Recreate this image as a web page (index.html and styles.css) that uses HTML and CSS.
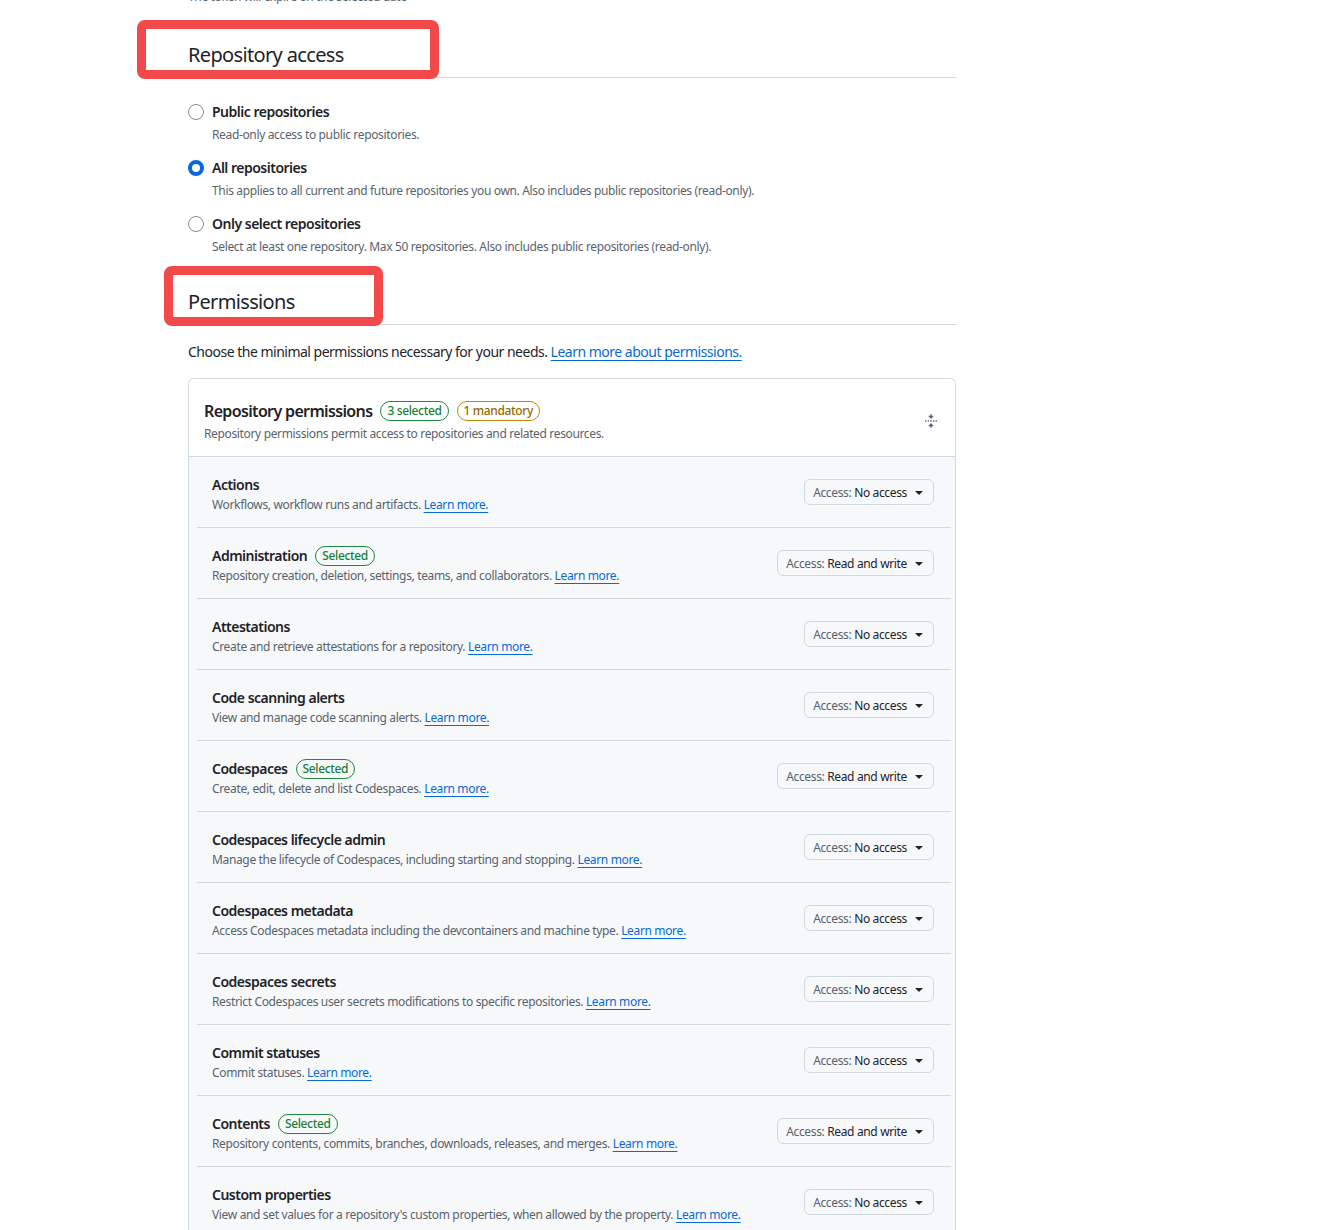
FILE: index.html
```html
<!DOCTYPE html>
<html lang="en">
<head>
<meta charset="utf-8">
<title>Fine-grained token</title>
<link rel="stylesheet" href="styles.css">
</head>
<body>
<div class="page">
  <p class="expire-note">The token will expire on the selected date</p>

  <div class="section-head">
    <h2 class="section-title">Repository access</h2>
    <span class="annot annot-access"></span>
  </div>

  <div class="radio-list">
    <div class="option">
      <div class="option-row"><span class="radio"></span><span class="option-label">Public repositories</span></div>
      <p class="option-desc">Read-only access to public repositories.</p>
    </div>
    <div class="option">
      <div class="option-row"><span class="radio checked"></span><span class="option-label">All repositories</span></div>
      <p class="option-desc">This applies to all current and future repositories you own. Also includes public repositories (read-only).</p>
    </div>
    <div class="option">
      <div class="option-row"><span class="radio"></span><span class="option-label">Only select repositories</span></div>
      <p class="option-desc">Select at least one repository. Max 50 repositories. Also includes public repositories (read-only).</p>
    </div>
  </div>

  <div class="section-head perm-head">
    <h2 class="section-title">Permissions</h2>
    <span class="annot annot-perm"></span>
  </div>

  <p class="intro">Choose the minimal permissions necessary for your needs. <a href="#" class="link">Learn more about permissions.</a></p>

  <div class="card">
    <div class="card-head">
      <div class="card-head-text">
        <div class="card-title-row">
          <h3 class="card-title">Repository permissions</h3>
          <span class="badge badge-green">3 selected</span>
          <span class="badge badge-gold">1 mandatory</span>
        </div>
        <p class="card-desc">Repository permissions permit access to repositories and related resources.</p>
      </div>
      <svg class="fold-icon" viewBox="0 0 16 16" width="16" height="16" aria-hidden="true"><path d="M10.896 2H8.75V.75a.75.75 0 0 0-1.5 0V2H5.104a.25.25 0 0 0-.177.427l2.896 2.896a.25.25 0 0 0 .354 0l2.896-2.896A.25.25 0 0 0 10.896 2ZM8.75 15.250a.75.75 0 0 1-1.5 0V14H5.104a.25.25 0 0 1-.177-.427l2.896-2.896a.25.25 0 0 1 .354 0l2.896 2.896a.25.25 0 0 1-.177.427H8.75v1.25Zm-6.5-6.5a.75.75 0 0 0 0-1.5h-.5a.75.75 0 0 0 0 1.5h.5ZM6 8a.75.75 0 0 1-.75.75h-.5a.75.75 0 0 1 0-1.5h.5A.75.75 0 0 1 6 8Zm2.25.75a.75.75 0 0 0 0-1.5h-.5a.75.75 0 0 0 0 1.5h.5ZM12 8a.75.75 0 0 1-.75.75h-.5a.75.75 0 0 1 0-1.5h.5A.75.75 0 0 1 12 8Zm2.25.75a.75.75 0 0 0 0-1.5h-.5a.75.75 0 0 0 0 1.5h.5Z"/></svg>
    </div>

    <div class="card-body">
      <div class="perm-row">
        <div class="perm-text">
          <div class="perm-title-row"><span class="perm-title">Actions</span></div>
          <p class="perm-desc">Workflows, workflow runs and artifacts. <a href="#" class="link">Learn more.</a></p>
        </div>
        <button class="access-btn"><span class="access-key">Access:</span> No access<svg class="caret" viewBox="0 0 16 16" width="16" height="16"><path d="m4.427 7.427 3.396 3.396a.25.25 0 0 0 .354 0l3.396-3.396A.25.25 0 0 0 11.396 7H4.604a.25.25 0 0 0-.177.427Z"/></svg></button>
      </div>
      <div class="perm-row">
        <div class="perm-text">
          <div class="perm-title-row"><span class="perm-title">Administration</span><span class="badge badge-green">Selected</span></div>
          <p class="perm-desc">Repository creation, deletion, settings, teams, and collaborators. <a href="#" class="link">Learn more.</a></p>
        </div>
        <button class="access-btn"><span class="access-key">Access:</span> Read and write<svg class="caret" viewBox="0 0 16 16" width="16" height="16"><path d="m4.427 7.427 3.396 3.396a.25.25 0 0 0 .354 0l3.396-3.396A.25.25 0 0 0 11.396 7H4.604a.25.25 0 0 0-.177.427Z"/></svg></button>
      </div>
      <div class="perm-row">
        <div class="perm-text">
          <div class="perm-title-row"><span class="perm-title">Attestations</span></div>
          <p class="perm-desc">Create and retrieve attestations for a repository. <a href="#" class="link">Learn more.</a></p>
        </div>
        <button class="access-btn"><span class="access-key">Access:</span> No access<svg class="caret" viewBox="0 0 16 16" width="16" height="16"><path d="m4.427 7.427 3.396 3.396a.25.25 0 0 0 .354 0l3.396-3.396A.25.25 0 0 0 11.396 7H4.604a.25.25 0 0 0-.177.427Z"/></svg></button>
      </div>
      <div class="perm-row">
        <div class="perm-text">
          <div class="perm-title-row"><span class="perm-title">Code scanning alerts</span></div>
          <p class="perm-desc">View and manage code scanning alerts. <a href="#" class="link">Learn more.</a></p>
        </div>
        <button class="access-btn"><span class="access-key">Access:</span> No access<svg class="caret" viewBox="0 0 16 16" width="16" height="16"><path d="m4.427 7.427 3.396 3.396a.25.25 0 0 0 .354 0l3.396-3.396A.25.25 0 0 0 11.396 7H4.604a.25.25 0 0 0-.177.427Z"/></svg></button>
      </div>
      <div class="perm-row">
        <div class="perm-text">
          <div class="perm-title-row"><span class="perm-title">Codespaces</span><span class="badge badge-green">Selected</span></div>
          <p class="perm-desc">Create, edit, delete and list Codespaces. <a href="#" class="link">Learn more.</a></p>
        </div>
        <button class="access-btn"><span class="access-key">Access:</span> Read and write<svg class="caret" viewBox="0 0 16 16" width="16" height="16"><path d="m4.427 7.427 3.396 3.396a.25.25 0 0 0 .354 0l3.396-3.396A.25.25 0 0 0 11.396 7H4.604a.25.25 0 0 0-.177.427Z"/></svg></button>
      </div>
      <div class="perm-row">
        <div class="perm-text">
          <div class="perm-title-row"><span class="perm-title">Codespaces lifecycle admin</span></div>
          <p class="perm-desc">Manage the lifecycle of Codespaces, including starting and stopping. <a href="#" class="link">Learn more.</a></p>
        </div>
        <button class="access-btn"><span class="access-key">Access:</span> No access<svg class="caret" viewBox="0 0 16 16" width="16" height="16"><path d="m4.427 7.427 3.396 3.396a.25.25 0 0 0 .354 0l3.396-3.396A.25.25 0 0 0 11.396 7H4.604a.25.25 0 0 0-.177.427Z"/></svg></button>
      </div>
      <div class="perm-row">
        <div class="perm-text">
          <div class="perm-title-row"><span class="perm-title">Codespaces metadata</span></div>
          <p class="perm-desc">Access Codespaces metadata including the devcontainers and machine type. <a href="#" class="link">Learn more.</a></p>
        </div>
        <button class="access-btn"><span class="access-key">Access:</span> No access<svg class="caret" viewBox="0 0 16 16" width="16" height="16"><path d="m4.427 7.427 3.396 3.396a.25.25 0 0 0 .354 0l3.396-3.396A.25.25 0 0 0 11.396 7H4.604a.25.25 0 0 0-.177.427Z"/></svg></button>
      </div>
      <div class="perm-row">
        <div class="perm-text">
          <div class="perm-title-row"><span class="perm-title">Codespaces secrets</span></div>
          <p class="perm-desc">Restrict Codespaces user secrets modifications to specific repositories. <a href="#" class="link">Learn more.</a></p>
        </div>
        <button class="access-btn"><span class="access-key">Access:</span> No access<svg class="caret" viewBox="0 0 16 16" width="16" height="16"><path d="m4.427 7.427 3.396 3.396a.25.25 0 0 0 .354 0l3.396-3.396A.25.25 0 0 0 11.396 7H4.604a.25.25 0 0 0-.177.427Z"/></svg></button>
      </div>
      <div class="perm-row">
        <div class="perm-text">
          <div class="perm-title-row"><span class="perm-title">Commit statuses</span></div>
          <p class="perm-desc">Commit statuses. <a href="#" class="link">Learn more.</a></p>
        </div>
        <button class="access-btn"><span class="access-key">Access:</span> No access<svg class="caret" viewBox="0 0 16 16" width="16" height="16"><path d="m4.427 7.427 3.396 3.396a.25.25 0 0 0 .354 0l3.396-3.396A.25.25 0 0 0 11.396 7H4.604a.25.25 0 0 0-.177.427Z"/></svg></button>
      </div>
      <div class="perm-row">
        <div class="perm-text">
          <div class="perm-title-row"><span class="perm-title">Contents</span><span class="badge badge-green">Selected</span></div>
          <p class="perm-desc">Repository contents, commits, branches, downloads, releases, and merges. <a href="#" class="link">Learn more.</a></p>
        </div>
        <button class="access-btn"><span class="access-key">Access:</span> Read and write<svg class="caret" viewBox="0 0 16 16" width="16" height="16"><path d="m4.427 7.427 3.396 3.396a.25.25 0 0 0 .354 0l3.396-3.396A.25.25 0 0 0 11.396 7H4.604a.25.25 0 0 0-.177.427Z"/></svg></button>
      </div>
      <div class="perm-row">
        <div class="perm-text">
          <div class="perm-title-row"><span class="perm-title">Custom properties</span></div>
          <p class="perm-desc">View and set values for a repository's custom properties, when allowed by the property. <a href="#" class="link">Learn more.</a></p>
        </div>
        <button class="access-btn"><span class="access-key">Access:</span> No access<svg class="caret" viewBox="0 0 16 16" width="16" height="16"><path d="m4.427 7.427 3.396 3.396a.25.25 0 0 0 .354 0l3.396-3.396A.25.25 0 0 0 11.396 7H4.604a.25.25 0 0 0-.177.427Z"/></svg></button>
      </div>
    </div>
  </div>
</div>
</body>
</html>
```

FILE: styles.css
```css
* { box-sizing: border-box; }

html, body {
  margin: 0;
  padding: 0;
  background: #ffffff;
  overflow: hidden;
}

body {
  font-family: "Noto Sans", "Open Sans", sans-serif;
  color: #1f2328;
  font-size: 14px;
  letter-spacing: -0.5px;
}

.page {
  margin-left: 188px;
  width: 768px;
}

p { margin: 0; }

.expire-note {
  margin-top: -12px;
  font-size: 12px;
  line-height: 18px;
  color: #59636e;
  letter-spacing: -0.35px;
}

.section-head {
  position: relative;
  margin-top: 34px;
  border-bottom: 1px solid #d1d9e0;
  padding-bottom: 7px;
}

.section-title {
  margin: 0;
  font-size: 20px;
  font-weight: 400;
  line-height: 30px;
  color: #1f2328;
  letter-spacing: -0.65px;
}

.annot {
  position: absolute;
  border: 9px solid #f24a4a;
  border-radius: 8px;
}

.annot-access {
  left: -51px;
  top: -20px;
  width: 302px;
  height: 59px;
}

.annot-perm {
  left: -24px;
  top: -21px;
  width: 219px;
  height: 60px;
}

.radio-list {
  margin-top: 24px;
  display: flex;
  flex-direction: column;
  gap: 14px;
}

.option-row {
  display: flex;
  align-items: center;
  gap: 8px;
  height: 20px;
}

.radio {
  width: 16px;
  height: 16px;
  border-radius: 50%;
  border: 1px solid #818b98;
  background: #fff;
  flex: none;
}

.radio.checked {
  border: 4px solid #0969da;
}

.option-label {
  font-weight: 600;
  font-size: 14px;
  line-height: 20px;
}

.option-desc {
  margin-top: 4px;
  margin-left: 24px;
  font-size: 12px;
  line-height: 18px;
  color: #59636e;
  letter-spacing: -0.35px;
}

.perm-head {
  margin-top: 31px;
}

.intro {
  margin-top: 17px;
  line-height: 20px;
  font-size: 14px;
}

.link {
  color: #0969da;
  text-decoration: underline;
  text-underline-offset: 3px;
}

.card {
  margin-top: 16px;
  border: 1px solid #d1d9e0;
  border-bottom: none;
  border-radius: 6px 6px 0 0;
  overflow: hidden;
}

.card-head {
  display: flex;
  align-items: center;
  justify-content: space-between;
  padding: 20px 16px 13px 15px;
  background: #ffffff;
  border-bottom: 1px solid #d1d9e0;
}

.card-title-row {
  display: flex;
  align-items: center;
  gap: 8px;
  height: 24px;
}

.card-title {
  margin: 0;
  font-size: 16px;
  font-weight: 600;
  line-height: 24px;
  letter-spacing: -0.65px;
}

.badge {
  display: inline-flex;
  align-items: center;
  height: 20px;
  padding: 0 6px;
  border: 1px solid;
  border-radius: 2em;
  font-size: 12px;
  font-weight: 500;
  line-height: 18px;
  letter-spacing: -0.35px;
}

.badge-green {
  color: #1a7f37;
  border-color: #1f883d;
}

.badge-gold {
  color: #9a6700;
  border-color: #bf8700;
}

.card-desc {
  margin-top: 2px;
  font-size: 12px;
  line-height: 18px;
  color: #59636e;
  letter-spacing: -0.35px;
}

.fold-icon {
  fill: #59636e;
  margin-right: 1px;
  margin-top: -1px;
  width: 14px;
  height: 14px;
}

.card-body {
  background: #f6f8fa;
  padding: 0 4px 0 8px;
}

.perm-row {
  display: flex;
  align-items: center;
  justify-content: space-between;
  padding: 18px 17px 13px 15px;
  border-bottom: 1px solid #d1d9e0;
}

.perm-title-row {
  display: flex;
  align-items: center;
  gap: 8px;
  height: 20px;
}

.perm-title {
  font-weight: 600;
  font-size: 14px;
  line-height: 20px;
}

.perm-desc {
  margin-top: 1px;
  font-size: 12px;
  line-height: 18px;
  color: #59636e;
  letter-spacing: -0.35px;
}

.access-btn {
  display: inline-flex;
  align-items: center;
  height: 26px;
  margin-top: -5px;
  padding: 0 6px 0 8px;
  border: 1px solid #d1d9e0;
  border-radius: 6px;
  background: #f6f8fa;
  font-family: inherit;
  font-size: 12px;
  letter-spacing: -0.35px;
  color: #1f2328;
  white-space: pre;
  cursor: pointer;
}

.access-key {
  color: #59636e;
}

.caret {
  fill: #1f2328;
  width: 16px;
  height: 16px;
  margin-left: 4px;
}
```
